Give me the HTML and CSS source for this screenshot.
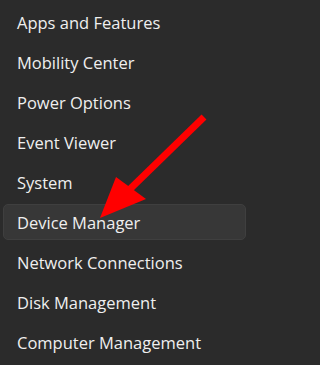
FILE: index.html
```html
<!DOCTYPE html>
<html>
<head>
<meta charset="utf-8">
<link rel="stylesheet" href="styles.css">
</head>
<body>
<div class="menu">
  <ul class="list">
    <li class="item">Apps and Features</li>
    <li class="item">Mobility Center</li>
    <li class="item">Power Options</li>
    <li class="item">Event Viewer</li>
    <li class="item">System</li>
    <li class="item active">Device Manager</li>
    <li class="item">Network Connections</li>
    <li class="item">Disk Management</li>
    <li class="item">Computer Management</li>
  </ul>
  <svg class="arrow" width="250" height="365" viewBox="0 0 250 365">
    <line x1="204" y1="117" x2="128" y2="191" stroke="#ff0000" stroke-width="7"/>
    <polygon points="116,177 146,199 100,218" fill="#ff0000"/>
  </svg>
</div>
</body>
</html>
```

FILE: styles.css
```css
html, body {
  margin: 0;
  padding: 0;
  background: #2b2b2b;
}
.menu {
  position: relative;
  width: 250px;
  height: 365px;
  overflow: hidden;
  background: #2b2b2b;
}
.list {
  list-style: none;
  margin: 0;
  padding: 4px 4px 0 3px;
  display: flex;
  flex-direction: column;
  gap: 4px;
}
.item {
  height: 36px;
  box-sizing: border-box;
  display: flex;
  align-items: center;
  padding-left: 13px;
  font-family: "Open Sans", "Noto Sans", sans-serif;
  font-size: 16.5px;
  color: #efefef;
  border: 1px solid transparent;
  border-radius: 5px;
}
.item.active {
  background: #373737;
  border-color: #3f3f3f;
}
.arrow {
  position: absolute;
  left: 0;
  top: 0;
}
```
